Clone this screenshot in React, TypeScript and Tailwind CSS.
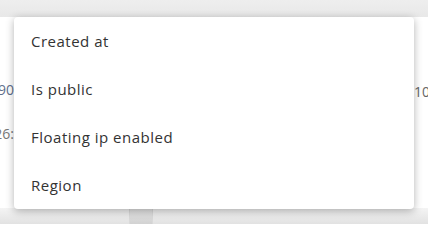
import React from "react";

const items = ["Created at", "Is public", "Floating ip enabled", "Region"];

export default function App() {
  return (
    <div
      className="relative w-[428px] h-[224px] overflow-hidden bg-white"
      style={{ fontFamily: "'Open Sans', Lato, sans-serif" }}
    >
      <div className="flex flex-col h-full">
        <div className="h-[17px] bg-gradient-to-b from-[#eeeeee] to-[#e8e8e8]" />
        <div className="flex flex-1 bg-white">
          <div className="w-[14px] flex flex-col items-end pt-[64px] gap-[26px] text-[14px] leading-[18px] whitespace-nowrap">
            <span className="text-[#5f6f8c]">390</span>
            <span className="text-[#777]">0:26:</span>
          </div>
          <div className="flex-1" />
          <div className="w-[14px] pt-[66px] text-[14px] leading-[18px] text-[#666] whitespace-nowrap">10</div>
        </div>
        <div className="flex h-[16px] bg-gradient-to-b from-[#f4f4f4] to-[#e2e2e2] pl-[129px]">
          <div className="h-full w-[24px] bg-gradient-to-b from-[#e6e6e6] to-[#d2d2d2] border-x border-[#d9d9d9]" />
        </div>
      </div>
      <div className="absolute left-[14px] top-[17px] w-[400px] rounded-[4px] bg-white shadow-[0_2px_8px_rgba(0,0,0,0.3)]">
        {items.map((t) => (
          <div
            key={t}
            className="h-[48px] flex items-center pl-[17px] text-[15px] tracking-[0.5px] text-[#333]"
          >
            {t}
          </div>
        ))}
      </div>
    </div>
  );
}
